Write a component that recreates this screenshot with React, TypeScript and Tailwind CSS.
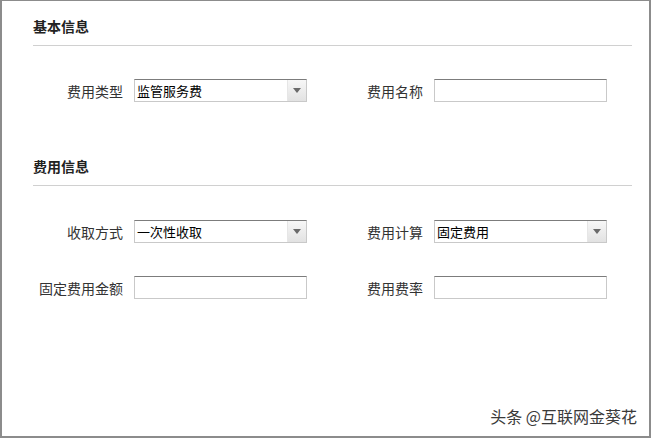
const font = { fontFamily: '"Noto Sans CJK SC", "Microsoft YaHei", sans-serif' };

const Field = ({ label, value, select }: { label: string; value?: string; select?: boolean }) => (
  <div className="flex items-center w-[300px]">
    <div className="w-[90px] text-right text-[14px] leading-[22px] text-[#333]">{label}</div>
    <div className="ml-[11px] w-[173px] h-[23px] flex bg-white border border-[#c9c9c9] border-t-[#7c7c7c]">
      <div className="flex-1 pl-[2px] text-[13px] leading-[21px] text-black">{value}</div>
      {select && (
        <div className="w-[19px] h-full flex items-center justify-center bg-gradient-to-b from-[#f7f7f7] to-[#e2e2e2] border-l border-[#e6e6e6]">
          <div className="w-0 h-0 border-l-[4px] border-r-[4px] border-t-[5px] border-l-transparent border-r-transparent border-t-[#6a6a6a]" />
        </div>
      )}
    </div>
  </div>
);

const Section = ({ title }: { title: string }) => (
  <div className="w-[599px] pb-[9px] border-b border-[#d0d0d0] text-[14px] leading-[20px] font-bold text-[#222]">
    {title}
  </div>
);

export default function App() {
  return (
    <div
      className="relative w-[651px] h-[438px] bg-white border-2 border-t border-[#8c8c8c] pl-[31px] pt-[15px]"
      style={font}
    >
      <Section title="基本信息" />
      <div className="flex mt-[33px]">
        <Field label="费用类型" value="监管服务费" select />
        <Field label="费用名称" />
      </div>

      <div className="mt-[54px]">
        <Section title="费用信息" />
      </div>
      <div className="flex mt-[34px]">
        <Field label="收取方式" value="一次性收取" select />
        <Field label="费用计算" value="固定费用" select />
      </div>
      <div className="flex mt-[33px]">
        <Field label="固定费用金额" />
        <Field label="费用费率" />
      </div>

      <div className="absolute right-[12px] bottom-[10px] text-[16px] leading-[20px] text-[#3a3a3a] [text-shadow:0_0_2px_#fff]">
        头条 @互联网金葵花
      </div>
    </div>
  );
}
